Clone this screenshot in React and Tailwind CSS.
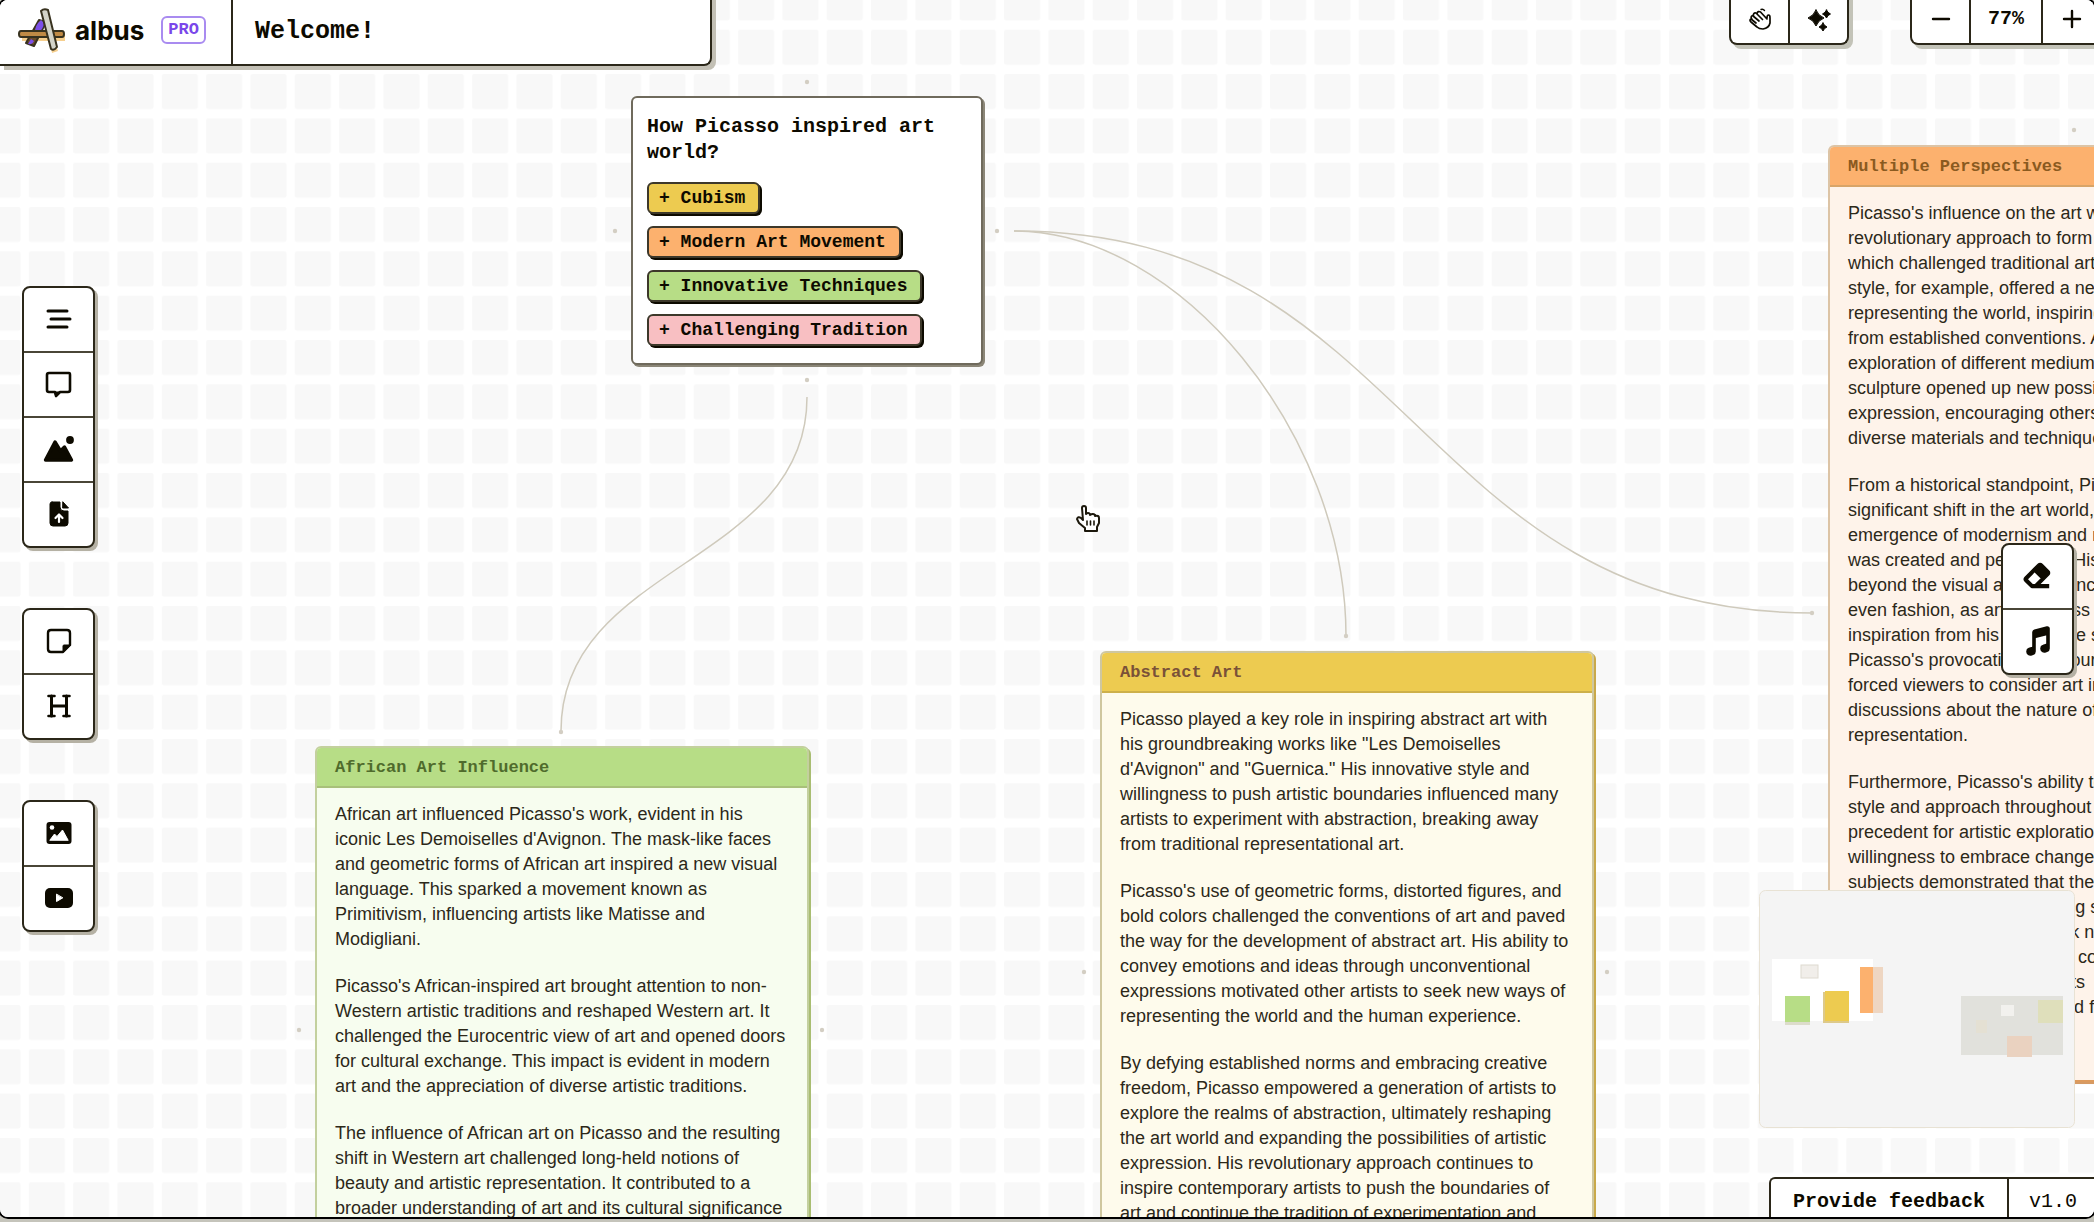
import { BiSolidEraser } from 'react-icons/bi';
import { IoMusicalNotes } from 'react-icons/io5';

const mono = "font-['Liberation_Mono',monospace]";
const panelCls = 'flex bg-white border-2 border-[#2b2719] pointer-events-auto';
const toolShadow = 'shadow-[3px_3px_0_#b5b1a4]';

const TOPICS = [
  { label: 'Cubism',                bg: 'bg-[#edcb50]' },
  { label: 'Modern Art Movement',   bg: 'bg-[#fcb16e]' },
  { label: 'Innovative Techniques', bg: 'bg-[#b7dd86]' },
  { label: 'Challenging Tradition', bg: 'bg-[#f8bfc2]' },
];

const NOTES = [
  {
    title: 'African Art Influence',
    pos:   'left-[315px] top-[746px] h-[568px]',
    card:  'border-[#c3d09e] bg-[#f7fdef] shadow-[2px_2px_0_#a9bd72]',
    head:  'bg-[#b7dd86] border-[#a8c07a] text-[#4f6b2c]',
    paragraphs: [
      ["African art influenced Picasso's work, evident in his", "iconic Les Demoiselles d'Avignon. The mask-like faces", 'and geometric forms of African art inspired a new visual', 'language. This sparked a movement known as', 'Primitivism, influencing artists like Matisse and', 'Modigliani.'],
      ["Picasso's African-inspired art brought attention to non-", 'Western artistic traditions and reshaped Western art. It', 'challenged the Eurocentric view of art and opened doors', 'for cultural exchange. This impact is evident in modern', 'art and the appreciation of diverse artistic traditions.'],
      ['The influence of African art on Picasso and the resulting', 'shift in Western art challenged long-held notions of', 'beauty and artistic representation. It contributed to a', 'broader understanding of art and its cultural significance'],
    ],
  },
  {
    title: 'Abstract Art',
    pos:   'left-[1100px] top-[651px] h-[640px]',
    card:  'border-[#cfc79f] bg-[#fefbec] shadow-[2px_2px_0_#c9a94a]',
    head:  'bg-[#edcb50] border-[#cdb04a] text-[#7a5138]',
    paragraphs: [
      ['Picasso played a key role in inspiring abstract art with', 'his groundbreaking works like "Les Demoiselles', 'd\'Avignon" and "Guernica." His innovative style and', 'willingness to push artistic boundaries influenced many', 'artists to experiment with abstraction, breaking away', 'from traditional representational art.'],
      ["Picasso's use of geometric forms, distorted figures, and", 'bold colors challenged the conventions of art and paved', 'the way for the development of abstract art. His ability to', 'convey emotions and ideas through unconventional', 'expressions motivated other artists to seek new ways of', 'representing the world and the human experience.'],
      ['By defying established norms and embracing creative', 'freedom, Picasso empowered a generation of artists to', 'explore the realms of abstraction, ultimately reshaping', 'the art world and expanding the possibilities of artistic', 'expression. His revolutionary approach continues to', 'inspire contemporary artists to push the boundaries of', 'art and continue the tradition of experimentation and'],
    ],
  },
  {
    title: 'Multiple Perspectives',
    pos:   'left-[1828px] top-[145px] h-[937px]',
    card:  'border-[#dcc4a6] border-b-[#dd9a5c] bg-[#fef3ea] shadow-[2px_2px_0_#d69a63]',
    head:  'bg-[#fcb16e] border-[#d8a468] text-[#8a5a1f]',
    paragraphs: [
      ["Picasso's influence on the art world", 'revolutionary approach to form', 'which challenged traditional art', 'style, for example, offered a new', 'representing the world, inspiring', 'from established conventions. A', 'exploration of different mediums', 'sculpture opened up new possibilities', 'expression, encouraging others', 'diverse materials and techniques'],
      ["From a historical standpoint, Picasso's", 'significant shift in the art world,', 'emergence of modernism and m', 'was created and perceived. His', 'beyond the visual arts, influenced', 'even fashion, as artists across', 'inspiration from his immersive s', "Picasso's provocative and bour", 'forced viewers to consider art in', 'discussions about the nature of', 'representation.'],
      ["Furthermore, Picasso's ability to", 'style and approach throughout', 'precedent for artistic exploration', 'willingness to embrace change', 'subjects demonstrated that the', 'continuous pursuit of evolving s', 'and the courage to also seek n', 'to inspire artists for today by co', 'boundaries for creating artists', 'remains in all art of today and f'],
    ],
  },
];

const EDGES = [
  'M807 397C807 564 561 564 561 731',
  'M1014 231C1180 231 1346 434 1346 636',
  'M1014 231C1413 231 1413 613 1813 613',
];

const HANDLES = [
  [807, 82], [615, 231], [997, 231], [807, 380],
  [561, 732], [299, 1030], [822, 1030],
  [1346, 636], [1084, 972], [1607, 972],
  [1812, 613], [2074, 130],
];

const star = (x, y, r) => {
  const k = r * 0.28;
  return `M${x} ${y - r}Q${x + k} ${y - k} ${x + r} ${y}Q${x + k} ${y + k} ${x} ${y + r}Q${x - k} ${y + k} ${x - r} ${y}Q${x - k} ${y - k} ${x} ${y - r}Z`;
};

/* ── Icons ─────────────────────────────────────── */
const Svg = ({ w = 32, h = 32, children }) => (
  <svg width={w} height={h} viewBox={`0 0 ${w} ${h}`} fill="none" stroke="#0d0a00" strokeLinecap="round" strokeLinejoin="round" aria-hidden="true">
    {children}
  </svg>
);

const LinesIcon = () => (
  <Svg><path d="M5 8H24M8 16H27M5 24H24" strokeWidth="3" /></Svg>
);

const ChatIcon = () => (
  <Svg>
    <path d="M6 5H26Q27 5 27 7V22Q27 24 25 24H17L13 28L12 24H6Q4 24 4 22V7Q4 5 6 5Z" strokeWidth="2.6" />
    <path d="M12 24H17L13 28Z" fill="#0d0a00" />
  </Svg>
);

const MountainIcon = () => (
  <Svg>
    <circle cx="27" cy="7" r="3.9" fill="#0d0a00" stroke="none" />
    <path d="M2.5 27L12 9L17.500 18L21.500 14L28.500 27Z" fill="#0d0a00" strokeWidth="3.4" />
  </Svg>
);

const FileUpIcon = () => (
  <Svg>
    <path d="M9 4H17V9Q17 13 21 13H25V25Q25 28 22 28H10Q7 28 7 25V6Q7 4 9 4Z" fill="#0d0a00" strokeWidth="1" />
    <path d="M20 4L25.500 10H20Z" fill="#0d0a00" strokeWidth="1" />
    <path d="M16 24V18M12.500 20L16 16.500L19.500 20" stroke="#fff" strokeWidth="2.2" />
  </Svg>
);

const NoteIcon = () => (
  <Svg>
    <path d="M8 5H24Q27 5 27 8V20L20 27H8Q5 27 5 24V8Q5 5 8 5Z" strokeWidth="2.4" />
    <path d="M20 27V21Q20 20 21 20H27Z" fill="#0d0a00" strokeWidth="1" />
  </Svg>
);

const HeadingIcon = () => (
  <Svg>
    <path d="M8.500 6V26M23.500 6V26M8.500 16H23.500" strokeWidth="3" />
    <path d="M5.500 6H11.500M5.500 26H11.500M20.500 6H26.500M20.500 26H26.500" strokeWidth="2.6" />
  </Svg>
);

const ImageIcon = () => (
  <Svg>
    <rect x="3.500" y="5" width="25" height="22" rx="3" fill="#0d0a00" stroke="none" />
    <circle cx="9" cy="10.500" r="2.300" fill="#fff" stroke="none" />
    <path d="M7 23L11.500 17L14 19.500L19.500 13L25 23Z" fill="#fff" stroke="#fff" strokeWidth="1" />
  </Svg>
);

const YoutubeIcon = () => (
  <Svg>
    <rect x="2" y="6" width="28" height="20" rx="5" fill="#0d0a00" stroke="none" />
    <path d="M13.500 12.500V19.500L19.500 16Z" fill="#fff" stroke="#fff" strokeWidth="1" />
  </Svg>
);

const HandIcon = () => (
  <Svg w={24} h={24}>
    <path
      d="M3 15L9 20Q11 22 15 22Q21 21 22 16V11Q22 8 20.500 8Q19 8 19 11M3 15Q1 13 3 12L8 16M4 12.500Q2 9.500 4.500 8.500L11 14M5.500 9Q5 5.500 8 6L14.500 12.500M9 6.500Q10 3.500 12.500 5L19 12"
      strokeWidth="1.7"
    />
    <path d="M13 2.500Q15 1.500 16.500 3.500" strokeWidth="1.4" />
  </Svg>
);

const SparklesIcon = () => (
  <Svg>
    <path d={`${star(13, 15, 8)}${star(23.5, 11, 4)}${star(20, 24, 4)}`} fill="#0d0a00" strokeWidth="1" />
  </Svg>
);

const MinusIcon = () => <Svg><path d="M8 16H24" strokeWidth="2.400" /></Svg>;
const PlusIcon  = () => <Svg><path d="M8 16H24M16 8V24" strokeWidth="2.400" /></Svg>;

const Logo = () => (
  <svg width="48" height="46" viewBox="0 0 48 46" strokeLinejoin="round" aria-hidden="true">
    <g fill="#f6cf8e" transform="translate(2 2)">
      <path d="M3 25H46V32H3Z" />
      <path d="M33 44L39 42L35 30H30Z" />
    </g>
    <path d="M22 13L29 15L17 39L9 36Z" fill="#6b4a2a" stroke="#38321f" strokeWidth="2" />
    <path d="M24 13Q29 16 25 22Q21 27 18 25Q18 18 24 13ZM14 32L17 34Q15 38 11 37Z" fill="#7c4fe8" />
    <path d="M4 24H45Q47 24 47 27Q47 30 45 30H4Q2 30 2 27Q2 24 4 24Z" fill="#c08a45" stroke="#38321f" strokeWidth="2" />
    <path d="M24 4Q27 1 31 3L40 40Q37 44 34 42Z" fill="#d3d3c8" stroke="#38321f" strokeWidth="2" />
  </svg>
);

/* ── Pieces ────────────────────────────────────── */
function ToolGroup({ tools }) {
  return (
    <div className={`${panelCls} ${toolShadow} flex-col w-[73px] rounded-lg divide-y-2 divide-[#4a4637]`}>
      {tools.map(([label, icon]) => (
        <button key={label} aria-label={label} className="box-content h-[63px] flex items-center justify-center">
          {icon}
        </button>
      ))}
    </div>
  );
}

function Note({ note }) {
  return (
    <article className={`absolute w-[494px] overflow-hidden rounded-md border-2 ${note.pos} ${note.card}`}>
      <h2 className={`flex items-center h-10 px-[18px] pt-[2px] border-b-2 font-bold text-[17px] ${mono} ${note.head}`}>{note.title}</h2>
      <div className="px-[18px] pt-[14px] space-y-[22px] text-[18px] leading-[25px] text-[#2c2819] whitespace-nowrap">
        {note.paragraphs.map((lines) => (
          <p key={lines[0]}>
            {lines.map((line) => <span key={line} className="block">{line}</span>)}
          </p>
        ))}
      </div>
    </article>
  );
}

function CanvasLines() {
  return (
    <svg className="absolute inset-0 w-full h-full" aria-hidden="true">
      <defs>
        <pattern id="grid" x="28.8" y="29.7" width="44.33" height="44.33" patternUnits="userSpaceOnUse">
          <rect width="36" height="35" rx="2" fill="#f8f8f8" />
        </pattern>
      </defs>
      <rect width="100%" height="100%" fill="url(#grid)" />
      {EDGES.map((d) => <path key={d} d={d} fill="none" stroke="#cfcabc" strokeWidth="1.5" />)}
      {HANDLES.map(([x, y]) => <circle key={`${x}-${y}`} cx={x} cy={y} r="2.2" fill="#d3cec3" />)}
    </svg>
  );
}

function MiniMap() {
  return (
    <svg width="316" height="238" viewBox="0 0 316 238" className="absolute right-[19px] bottom-[89px]" role="img" aria-label="Mini map">
      <rect x="0.5" y="0.5" width="315" height="237" rx="6" fill="#f4f4f4" stroke="#e8e2d4" />
      <path d="M13 69H114V131H13Z" fill="#fff" />
      <rect x="42" y="75" width="17" height="13" fill="#f1eeea" stroke="#dedad0" />
      <rect x="26" y="132" width="25" height="3" fill="#dcdccb" />
      <rect x="26" y="106" width="25" height="26" fill="#b7dd86" />
      <rect x="64" y="102" width="26" height="31" fill="#ddc98a" />
      <rect x="66" y="101" width="24" height="30" fill="#edcb50" />
      <rect x="114" y="77" width="10" height="46" fill="#eed6c2" />
      <rect x="101" y="77" width="13" height="46" fill="#fcb16e" />
      <rect x="202" y="106" width="102" height="59" fill="#e1e1dc" />
      <rect x="242" y="115" width="13" height="11" fill="#f2f1ee" />
      <rect x="217" y="130" width="11" height="13" fill="#e4e0d3" />
      <rect x="279" y="110" width="25" height="23" fill="#dfdfbb" />
      <rect x="248" y="146" width="25" height="21" fill="#ead2c0" />
    </svg>
  );
}

export default function App() {
  return (
    <div className="h-screen overflow-hidden bg-[#c5c4bb] pb-[5px] font-['Liberation_Sans',Arial,sans-serif] text-[#0d0a00]">
      <main className="relative h-full overflow-hidden rounded-lg bg-white shadow-[0_0_0_2px_#000]">
        <CanvasLines />

        {/* ── Nodes ───────────────────────────────── */}
        <section className="absolute left-[631px] top-[96px] w-[352px] px-[14px] pt-4 pb-[17px] bg-white border-2 border-[#6f6a5c] rounded-md shadow-[2px_2px_0_#8b8677]">
          <h2 className={`text-[20px] leading-[26px] font-bold ${mono}`}>How Picasso inspired art world?</h2>
          <div className="mt-4 flex flex-col items-start gap-3">
            {TOPICS.map((t) => (
              <button key={t.label}
                className={`h-8 pl-[10px] pr-[13px] border-2 border-[#3d382a] rounded-md shadow-[2px_2px_0_#0d0a00] text-[18px] leading-none font-bold whitespace-nowrap ${mono} ${t.bg}`}
              >+ {t.label}</button>
            ))}
          </div>
        </section>
        {NOTES.map((n) => <Note key={n.title} note={n} />)}

        <div className="absolute left-[1075px] top-[505px]">
          <svg width="28" height="28" viewBox="0 0 28 28" fill="#fff" stroke="#1c180c" strokeWidth="2" strokeLinecap="round" strokeLinejoin="round" aria-hidden="true">
            <path d="M7 3Q7 1 9 1Q11 1 11 3V9Q13 7 15 9V10Q18 8 20 10V11Q24 10 24 13V18L22 22V26H10V23L4 18L2 14Q3 11 6 13L8 15Z" />
            <path d="M12 16V20M15.500 16V20M19 16V20" strokeWidth="1.600" />
          </svg>
        </div>

        {/* ── Top bar ─────────────────────────────── */}
        <header className="absolute inset-x-0 top-0 flex items-start pointer-events-none">
          <div className={`${panelCls} -mt-2 h-[74px] w-[34%] border-t-0 border-l-0 rounded-br-lg shadow-[4px_4px_0_#c3c0b5]`}>
            <a href="#home" className="w-[233px] flex items-center pl-[17px] pt-1 border-r-2 border-[#2b2719]">
              <Logo />
              <span className="ml-[10px] font-['Inter',sans-serif] font-bold text-[26px]">albus</span>
              <span className={`ml-[17px] h-7 px-[5px] flex items-center border-2 border-[#a98bf0] rounded-md text-[17px] font-bold text-[#7a47ea] ${mono}`}>PRO</span>
            </a>
            <h1 className={`flex items-center px-[22px] pt-2 text-[25px] font-bold ${mono}`}>Welcome!</h1>
          </div>

          <div className="ml-auto -mr-2 flex gap-[61px]">
            <div className={`${panelCls} -mt-[5px] h-[50px] border-t-0 rounded-b-lg divide-x-2 divide-[#2b2719] shadow-[4px_4px_0_#c3c3b8]`}>
              <button aria-label="Pan" className="box-content w-[57px] flex items-center justify-center"><HandIcon /></button>
              <button aria-label="Magic" className="box-content w-[57px] flex items-center justify-center"><SparklesIcon /></button>
            </div>
            <div className={`${panelCls} -mt-[5px] h-[50px] border-t-0 rounded-b-lg divide-x-2 divide-[#2b2719] shadow-[4px_4px_0_#c3c3b8]`}>
              <button aria-label="Zoom out" className="box-content w-[57px] flex items-center justify-center"><MinusIcon /></button>
              <span className={`box-content w-[70px] flex items-center justify-center text-[20px] font-bold ${mono}`}>77%</span>
              <button aria-label="Zoom in" className="box-content w-[57px] flex items-center justify-center"><PlusIcon /></button>
            </div>
          </div>
        </header>

        {/* ── Side tools ──────────────────────────── */}
        <nav className="absolute inset-y-0 left-[22px] flex flex-col justify-center gap-[60px]">
          <ToolGroup tools={[['Text', <LinesIcon />], ['Chat', <ChatIcon />], ['Generate image', <MountainIcon />], ['Upload file', <FileUpIcon />]]} />
          <ToolGroup tools={[['Note', <NoteIcon />], ['Heading', <HeadingIcon />]]} />
          <ToolGroup tools={[['Image', <ImageIcon />], ['Video', <YoutubeIcon />]]} />
        </nav>
        <nav className="absolute inset-y-0 right-5 flex flex-col justify-center">
          <ToolGroup tools={[['Eraser', <BiSolidEraser size={33} strokeWidth="1" stroke="currentColor" />], ['Music', <IoMusicalNotes size={32} strokeWidth="26" stroke="currentColor" />]]} />
        </nav>

        <MiniMap />

        <footer className={`absolute bottom-0 -right-[3px] h-10 flex items-stretch bg-white border-t-2 border-l-2 border-[#2b2719] rounded-tl-md text-[20px] ${mono}`}>
          <button className="px-[22px] pt-2 font-bold">Provide feedback</button>
          <span className="flex items-center px-5 pt-2 border-l-2 border-[#2b2719]">v1.0</span>
        </footer>
      </main>
    </div>
  );
}
